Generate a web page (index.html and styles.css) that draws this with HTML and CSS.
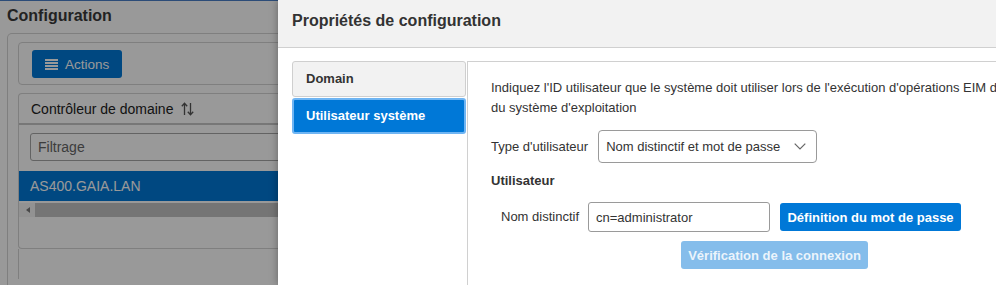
FILE: index.html
```html
<!DOCTYPE html>
<html>

<head>
    <title>Configuration</title>
    <link rel="stylesheet" href="styles.css">
</head>

<body>
    <div class="app">
        <div class="app-bar"></div>
        <h1 class="app-title">Configuration</h1>
        <div class="panel">
            <div class="toolbar">
                <button class="btn-actions">
                    <svg width="13" height="11" viewBox="0 0 13 11">
                        <rect x="0" y="0" width="13" height="2" fill="#fff"/>
                        <rect x="0" y="3" width="13" height="2" fill="#fff"/>
                        <rect x="0" y="6" width="13" height="2" fill="#fff"/>
                        <rect x="0" y="9" width="13" height="2" fill="#fff"/>
                    </svg>
                    Actions
                </button>
            </div>
            <div class="grid">
                <div class="grid-head">
                    Contrôleur de domaine
                    <svg class="sort-icon" width="13" height="14" viewBox="0 0 13 14">
                        <path d="M3.5 13V1.5M0.8 4.2L3.5 1.2L6.2 4.2" fill="none" stroke="#555" stroke-width="1.3"/>
                        <path d="M9.5 1V12.5M6.8 9.8L9.5 12.8L12.2 9.8" fill="none" stroke="#555" stroke-width="1.3"/>
                    </svg>
                </div>
                <div class="grid-filter">
                    <input type="text" placeholder="Filtrage">
                </div>
                <div class="grid-row selected">AS400.GAIA.LAN</div>
                <div class="hscroll">
                    <span class="hscroll-arrow"></span>
                    <span class="hscroll-thumb"></span>
                </div>
                <div class="grid-body"></div>
            </div>
            <div class="grid-foot"></div>
        </div>
    </div>

    <div class="overlay"></div>

    <div class="dialog">
        <div class="dlg-head">Propriétés de configuration</div>
        <div class="dlg-body">
            <div class="tabs">
                <div class="tab">Domain</div>
                <div class="tab active">Utilisateur système</div>
            </div>
            <div class="content">
                <p class="desc">Indiquez l'ID utilisateur que le système doit utiliser lors de l'exécution d'opérations EIM de la part des fonctions<br>du système d'exploitation</p>

                <div class="field-row">
                    <label class="field-label">Type d'utilisateur</label>
                    <div class="select">
                        <span>Nom distinctif et mot de passe</span>
                        <svg width="12" height="7" viewBox="0 0 12 7">
                            <polyline points="0.7,0.7 6,6 11.3,0.7" fill="none" stroke="#666" stroke-width="1.2"/>
                        </svg>
                    </div>
                </div>

                <div class="section-title">Utilisateur</div>

                <div class="user-row">
                    <label class="user-label">Nom distinctif</label>
                    <div class="user-fields">
                        <div class="user-line">
                            <input class="text-input" type="text" value="cn=administrator">
                            <button class="btn btn-password">Définition du mot de passe</button>
                        </div>
                        <button class="btn btn-verify" disabled>Vérification de la connexion</button>
                    </div>
                </div>
            </div>
        </div>
    </div>
</body>
</html>
```

FILE: styles.css
```css
html, body {
    height: 285px;
}

body {
    margin: 0;
    overflow: hidden;
    position: relative;
    font-family: "Liberation Sans", Arial, sans-serif;
    font-size: 13px;
    color: #333;
    background-color: #fff;
}

/* background page */

.app {
    width: 278px;
    height: 285px;
    overflow: hidden;
}

.app-bar {
    height: 1px;
    background-color: #4a7fc8;
}

.app-title {
    margin: 5px 0 0 7px;
    font-size: 16px;
    line-height: 19px;
    color: #3a3a3a;
}

.panel {
    margin: 8px 0 0 7px;
    width: 420px;
    height: 252px;
    border: 1px solid #d4d4d4;
    border-bottom: 0;
    border-radius: 5px 5px 0 0;
    padding: 8px 0 0 10px;
    box-sizing: border-box;
}

.toolbar {
    border: 1px solid #d4d4d4;
    border-radius: 4px;
    padding: 7px 13px 6px 13px;
}

.btn-actions {
    display: flex;
    align-items: center;
    gap: 7px;
    height: 28px;
    width: 90px;
    padding: 0 0 0 13px;
    border: 0;
    border-radius: 3px;
    background-color: #0078d7;
    color: #fff;
    font-family: inherit;
    font-size: 13.5px;
}

.grid {
    margin-top: 8px;
    border: 1px solid #d4d4d4;
    border-right: 0;
    border-radius: 4px 0 0 4px;
}

.grid-head {
    display: flex;
    align-items: center;
    height: 29px;
    padding-left: 12px;
    font-size: 14px;
    color: #222;
    border-bottom: 2px solid #c6c6c6;
}

.sort-icon {
    margin-left: 8px;
}

.grid-filter {
    padding: 8px 0 10px 11px;
}

.grid-filter input {
    width: 400px;
    height: 28px;
    box-sizing: border-box;
    border: 1px solid #a6a6a6;
    border-radius: 3px;
    padding-left: 7px;
    font-family: inherit;
    font-size: 14px;
}

.grid-filter input::placeholder {
    color: #666;
}

.grid-row {
    height: 30px;
    line-height: 30px;
    padding-left: 11px;
    font-size: 14px;
}

.selected {
    background-color: #0078d7;
    color: #fff;
}

.hscroll {
    display: flex;
    height: 14px;
    margin-top: 2px;
    background-color: #f4f4f4;
}

.hscroll-arrow {
    position: relative;
    width: 16px;
}

.hscroll-arrow::after {
    content: "";
    position: absolute;
    left: 7px;
    top: 4px;
    border-style: solid;
    border-width: 3px 4px 3px 0;
    border-color: transparent #7a7a7a transparent transparent;
}

.hscroll-thumb {
    flex: 1;
    background-color: #c4c4c4;
}

.grid-body {
    height: 31px;
}

.grid-foot {
    height: 30px;
    border-left: 1px solid #d4d4d4;
}

.overlay {
    position: absolute;
    left: 0;
    top: 0;
    right: 0;
    bottom: 0;
    background-color: rgba(0, 0, 0, 0.4);
}

/* dialog */

.dialog {
    position: absolute;
    left: 278px;
    top: 0;
    bottom: 0;
    right: 0;
    overflow: hidden;
    background-color: #fff;
    box-shadow: 0 0 8px rgba(0, 0, 0, 0.35);
}

.dlg-head {
    height: 36px;
    padding: 11px 0 0 14px;
    background-color: #f2f2f2;
    border-bottom: 1px solid #d0d0d0;
    font-size: 16px;
    font-weight: bold;
    line-height: 19px;
    color: #333;
}

.dlg-body {
    display: flex;
    width: 1000px;
    padding: 13px 0 0 14px;
}

.tabs {
    width: 174px;
    margin-right: 1px;
}

.tab {
    height: 34px;
    line-height: 34px;
    padding-left: 13px;
    border: 1px solid #cfcfcf;
    border-radius: 3px;
    background-color: #f2f2f2;
    font-weight: bold;
    color: #333;
}

.tab.active {
    height: 32px;
    line-height: 32px;
    margin-top: 1px;
    padding-left: 12px;
    border: 2px solid #6fb5f3;
    background-color: #0078d7;
    color: #fff;
}

.content {
    flex: 1;
    height: 191px;
    border-top: 1px solid #d0d0d0;
    border-left: 1px solid #d0d0d0;
    padding: 16px 23px;
}

.desc {
    margin: 0;
    line-height: 20px;
    white-space: nowrap;
}

.field-row {
    display: flex;
    align-items: center;
    margin-top: 12px;
}

.field-label {
    margin-right: 10px;
}

.select {
    display: flex;
    align-items: center;
    justify-content: space-between;
    width: 219px;
    height: 33px;
    box-sizing: border-box;
    padding: 0 10px 0 7px;
    border: 1px solid #9a9a9a;
    border-radius: 4px;
}

.section-title {
    margin-top: 10px;
    line-height: 16px;
    font-weight: bold;
}

.user-row {
    display: flex;
    align-items: flex-start;
    margin-top: 13px;
    padding-left: 10px;
}

.user-label {
    line-height: 30px;
    margin-right: 9px;
}

.user-fields {
    display: flex;
    flex-direction: column;
    align-items: center;
}

.user-line {
    display: flex;
    align-items: center;
    gap: 10px;
}

.text-input {
    width: 182px;
    height: 30px;
    box-sizing: border-box;
    padding-left: 7px;
    border: 1px solid #9a9a9a;
    border-radius: 3px;
    font-family: inherit;
    font-size: 13px;
    color: #333;
}

.btn {
    height: 28px;
    border: 0;
    border-radius: 3px;
    font-family: inherit;
    font-size: 13px;
    font-weight: bold;
    color: #fff;
    background-color: #0078d7;
}

.btn-password {
    width: 181px;
}

.btn-verify {
    width: 187px;
    margin-top: 9px;
    background-color: #85bdeb;
    color: rgba(255, 255, 255, 0.85);
}
```
